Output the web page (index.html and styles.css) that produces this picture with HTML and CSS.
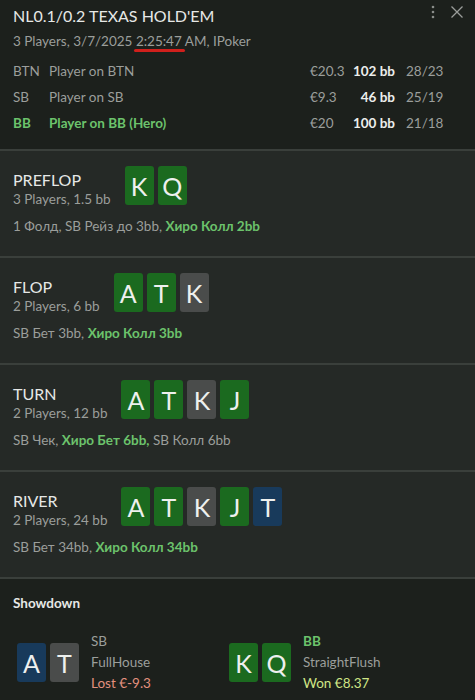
FILE: index.html
```html
<!DOCTYPE html>
<html lang="en">
<head>
    <meta charset="UTF-8">
    <meta name="viewport" content="width=device-width, initial-scale=1.0">
    <title>Hand History</title>
    <link rel="stylesheet" href="styles.css">
</head>
<body>
    <div class="hand">
        <header class="hand-head">
            <div class="head-tools">
                <svg class="tool" width="8" height="16" viewBox="0 0 8 16"><circle cx="4" cy="3" r="1.3" fill="#8a8d8a"/><circle cx="4" cy="8" r="1.3" fill="#8a8d8a"/><circle cx="4" cy="13" r="1.3" fill="#8a8d8a"/></svg>
                <svg class="tool" width="14" height="14" viewBox="0 0 14 14"><path d="M1.5 1.5l11 11M12.5 1.5l-11 11" stroke="#9a9d9a" stroke-width="1.3" fill="none"/></svg>
            </div>
            <h1 class="title">NL0.1/0.2 TEXAS HOLD'EM</h1>
            <p class="meta">3 Players, 3/7/2025 <span class="mark">2:25:47</span> AM, IPoker</p>
            <div class="players">
                <div class="player">
                    <span>BTN</span><span>Player on BTN</span><span>€20.3</span><b>102 bb</b><span class="ratio">28/23</span>
                </div>
                <div class="player">
                    <span>SB</span><span>Player on SB</span><span>€9.3</span><b>46 bb</b><span class="ratio">25/19</span>
                </div>
                <div class="player hero">
                    <span>BB</span><span>Player on BB (Hero)</span><span>€20</span><b>100 bb</b><span class="ratio">21/18</span>
                </div>
            </div>
        </header>

        <section class="street">
            <div class="street-top">
                <div class="street-info">
                    <h2>PREFLOP</h2>
                    <p>3 Players, 1.5 bb</p>
                </div>
                <div class="cards">
                    <span class="card green">K</span><span class="card green">Q</span>
                </div>
            </div>
            <p class="actions">1 Фолд, SB Рейз до 3bb, <b>Хиро Колл 2bb</b></p>
        </section>

        <section class="street">
            <div class="street-top">
                <div class="street-info">
                    <h2>FLOP</h2>
                    <p>2 Players, 6 bb</p>
                </div>
                <div class="cards">
                    <span class="card green">A</span><span class="card green">T</span><span class="card gray">K</span>
                </div>
            </div>
            <p class="actions">SB Бет 3bb, <b>Хиро Колл 3bb</b></p>
        </section>

        <section class="street">
            <div class="street-top">
                <div class="street-info">
                    <h2>TURN</h2>
                    <p>2 Players, 12 bb</p>
                </div>
                <div class="cards">
                    <span class="card green">A</span><span class="card green">T</span><span class="card gray">K</span><span class="card green">J</span>
                </div>
            </div>
            <p class="actions">SB Чек, <b>Хиро Бет 6bb,</b> SB Колл 6bb</p>
        </section>

        <section class="street">
            <div class="street-top">
                <div class="street-info">
                    <h2>RIVER</h2>
                    <p>2 Players, 24 bb</p>
                </div>
                <div class="cards">
                    <span class="card green">A</span><span class="card green">T</span><span class="card gray">K</span><span class="card green">J</span><span class="card blue">T</span>
                </div>
            </div>
            <p class="actions">SB Бет 34bb, <b>Хиро Колл 34bb</b></p>
        </section>

        <section class="showdown">
            <h3>Showdown</h3>
            <div class="hands">
                <div class="sd-hand">
                    <div class="cards">
                        <span class="card blue">A</span><span class="card gray">T</span>
                    </div>
                    <div class="sd-info">
                        <span>SB</span>
                        <span>FullHouse</span>
                        <span class="lost">Lost €-9.3</span>
                    </div>
                </div>
                <div class="sd-hand">
                    <div class="cards">
                        <span class="card green">K</span><span class="card green">Q</span>
                    </div>
                    <div class="sd-info">
                        <span class="hero-pos">BB</span>
                        <span>StraightFlush</span>
                        <span class="won">Won €8.37</span>
                    </div>
                </div>
            </div>
        </section>
    </div>
</body>
</html>
```

FILE: styles.css
```css
body {
    margin: 0;
    background: #1c201c;
    font-family: Lato, 'Open Sans', sans-serif;
    color: #9b9e9b;
}
.hand {
    width: 475px;
    height: 700px;
    overflow: hidden;
}
.hand-head {
    position: relative;
    background: #1c201c;
    padding: 5px 13px 13px;
    border-bottom: 2px solid #3a3f3b;
}
.head-tools {
    position: absolute;
    top: 4px;
    right: 11px;
    display: flex;
    align-items: center;
    gap: 13px;
}
.title {
    margin: 0;
    font-size: 16px;
    font-weight: 400;
    line-height: 22px;
    color: #e6e8e6;
}
.meta {
    margin: 4px 0 0;
    font-size: 13.5px;
    line-height: 20px;
}
.mark {
    position: relative;
}
.mark::after {
    content: "";
    position: absolute;
    left: -2px;
    right: -3px;
    bottom: -3px;
    height: 3px;
    border-radius: 2px;
    background: #d0201c;
}
.players {
    margin-top: 7px;
}
.player {
    display: grid;
    grid-template-columns: 36px 1fr 42px 43px 67px;
    height: 26px;
    align-items: center;
    font-size: 13.5px;
    white-space: nowrap;
}
.player b {
    text-align: right;
    color: #eceeec;
    font-weight: 700;
}
.ratio {
    padding-left: 11px;
}
.hero span:nth-child(-n+2) {
    color: #6cc36c;
    font-weight: 700;
}
.street {
    background: #252926;
    padding: 15px 13px 20px;
    border-bottom: 2px solid #3a3f3b;
}
.street-top {
    display: flex;
    align-items: flex-start;
    gap: 14px;
}
.street-info {
    padding-top: 4px;
}
.street-info h2 {
    margin: 0;
    font-size: 16px;
    font-weight: 400;
    line-height: 20px;
    color: #e6e8e6;
}
.street-info p {
    margin: 0;
    font-size: 13.5px;
    line-height: 18px;
}
.cards {
    display: flex;
    gap: 4px;
}
.card {
    width: 29px;
    height: 39px;
    border-radius: 3px;
    display: flex;
    align-items: center;
    justify-content: center;
    font-size: 25px;
    color: #eef0ee;
}
.green { background: #1b6a1f; }
.gray { background: #4a4c4b; }
.blue { background: #183a5b; }
.actions {
    margin: 9px 0 0;
    font-size: 13.5px;
    line-height: 19px;
}
.actions b {
    color: #6cc36c;
    font-weight: 700;
}
.showdown {
    background: #1c201c;
    padding: 14px 13px 0;
}
.showdown h3 {
    margin: 0;
    font-size: 13.5px;
    font-weight: 700;
    line-height: 20px;
    color: #e6e8e6;
}
.hands {
    display: grid;
    grid-template-columns: 212px 212px;
    padding: 18px 4px 0;
}
.sd-hand {
    display: flex;
    align-items: center;
    gap: 12px;
}
.sd-info {
    display: flex;
    flex-direction: column;
    font-size: 13.5px;
    line-height: 21px;
}
.hero-pos {
    color: #6cc36c;
    font-weight: 700;
}
.lost { color: #e3907f; }
.won { color: #cfe586; }
```
